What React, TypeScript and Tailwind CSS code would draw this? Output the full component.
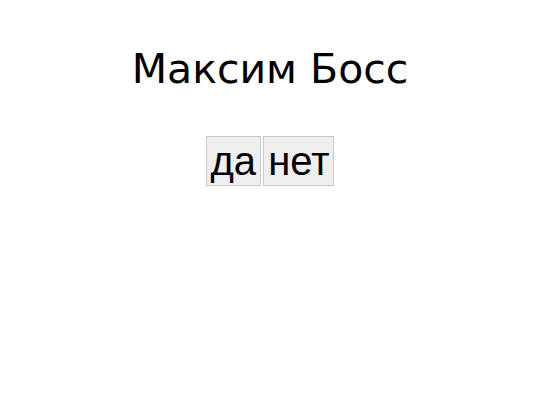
export default function App() {
  return (
    <div className="w-[540px] h-[405px] bg-white flex flex-col items-center pt-[46px]">
      <h1 className="text-[41px] leading-[1.164] text-black font-['DejaVu_Sans',sans-serif]">
        Максим Босс
      </h1>
      <div className="mt-[42px] flex gap-[2px] font-['Liberation_Sans',Arial,sans-serif]">
        <button className="text-[40px] leading-[1.15] px-[4px] py-[1px] bg-[#efefef] border border-[#c8c8c8] text-black">
          да
        </button>
        <button className="text-[40px] leading-[1.15] px-[4px] py-[1px] bg-[#efefef] border border-[#c8c8c8] text-black">
          нет
        </button>
      </div>
    </div>
  )
}
